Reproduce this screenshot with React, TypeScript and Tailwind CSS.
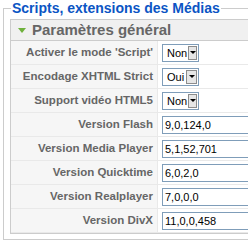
import React from 'react';

const selectRows = [
  { label: "Activer le mode 'Script'", value: 'Non' },
  { label: 'Encodage XHTML Strict', value: 'Oui' },
  { label: 'Support vidéo HTML5', value: 'Non' },
];

const textRows = [
  { label: 'Version Flash', value: '9,0,124,0' },
  { label: 'Version Media Player', value: '5,1,52,701' },
  { label: 'Version Quicktime', value: '6,0,2,0' },
  { label: 'Version Realplayer', value: '7,0,0,0' },
  { label: 'Version DivX', value: '11,0,0,458' },
];

function FakeSelect({ value }: { value: string }) {
  return (
    <div className="flex h-[18px] w-[37px] items-stretch border border-[#7f9db9] bg-white">
      <span className="flex-1 pl-[4px] text-[11px] leading-[16px] text-black">{value}</span>
      <span className="m-[1px] flex w-[11px] items-center justify-center border border-[#8c8c8c] bg-[#e6e6e6]">
        <span className="h-0 w-0 border-x-[3px] border-t-[3px] border-x-transparent border-t-black" />
      </span>
    </div>
  );
}

function Row({ label, children }: { label: string; children: React.ReactNode }) {
  return (
    <div className="flex h-[24px] border-b border-[#e9e9e9]">
      <div className="flex w-[147px] shrink-0 items-center justify-end border-r border-[#e9e9e9] bg-[#f6f6f6] pr-[4px] text-[11.5px] font-bold text-[#666]">
        {label}
      </div>
      <div className="flex items-center pl-[4px]">{children}</div>
    </div>
  );
}

export default function App() {
  return (
    <div className="h-[240px] w-[248px] overflow-hidden bg-white font-['Liberation_Sans',Arial,sans-serif]">
      <fieldset className="ml-[3px] mt-0 h-[240px] border border-r-0 border-[#ccc] pl-[6px] pr-0">
        <legend className="ml-[1px] px-[1px] text-[14px] font-bold leading-[16px] text-[#0b55c4]">
          Scripts, extensions des Médias
        </legend>
        <div className="mt-[3px] border border-r-0 border-[#ccc]">
          <div className="flex h-[21px] items-center gap-[6px] border-b border-[#ccc] bg-[#f0f0f0] pl-[7px]">
            <span className="h-0 w-0 border-x-[4px] border-t-[5px] border-x-transparent border-t-[#6fb13c]" />
            <span className="text-[15px] font-bold text-[#666]">Paramètres général</span>
          </div>
          {selectRows.map((r) => (
            <Row key={r.label} label={r.label}>
              <FakeSelect value={r.value} />
            </Row>
          ))}
          {textRows.map((r) => (
            <Row key={r.label} label={r.label}>
              <div className="h-[18px] w-[120px] border border-[#7f9db9] bg-white pl-[2px] text-[11px] leading-[16px] text-black">
                {r.value}
              </div>
            </Row>
          ))}
        </div>
      </fieldset>
    </div>
  );
}
